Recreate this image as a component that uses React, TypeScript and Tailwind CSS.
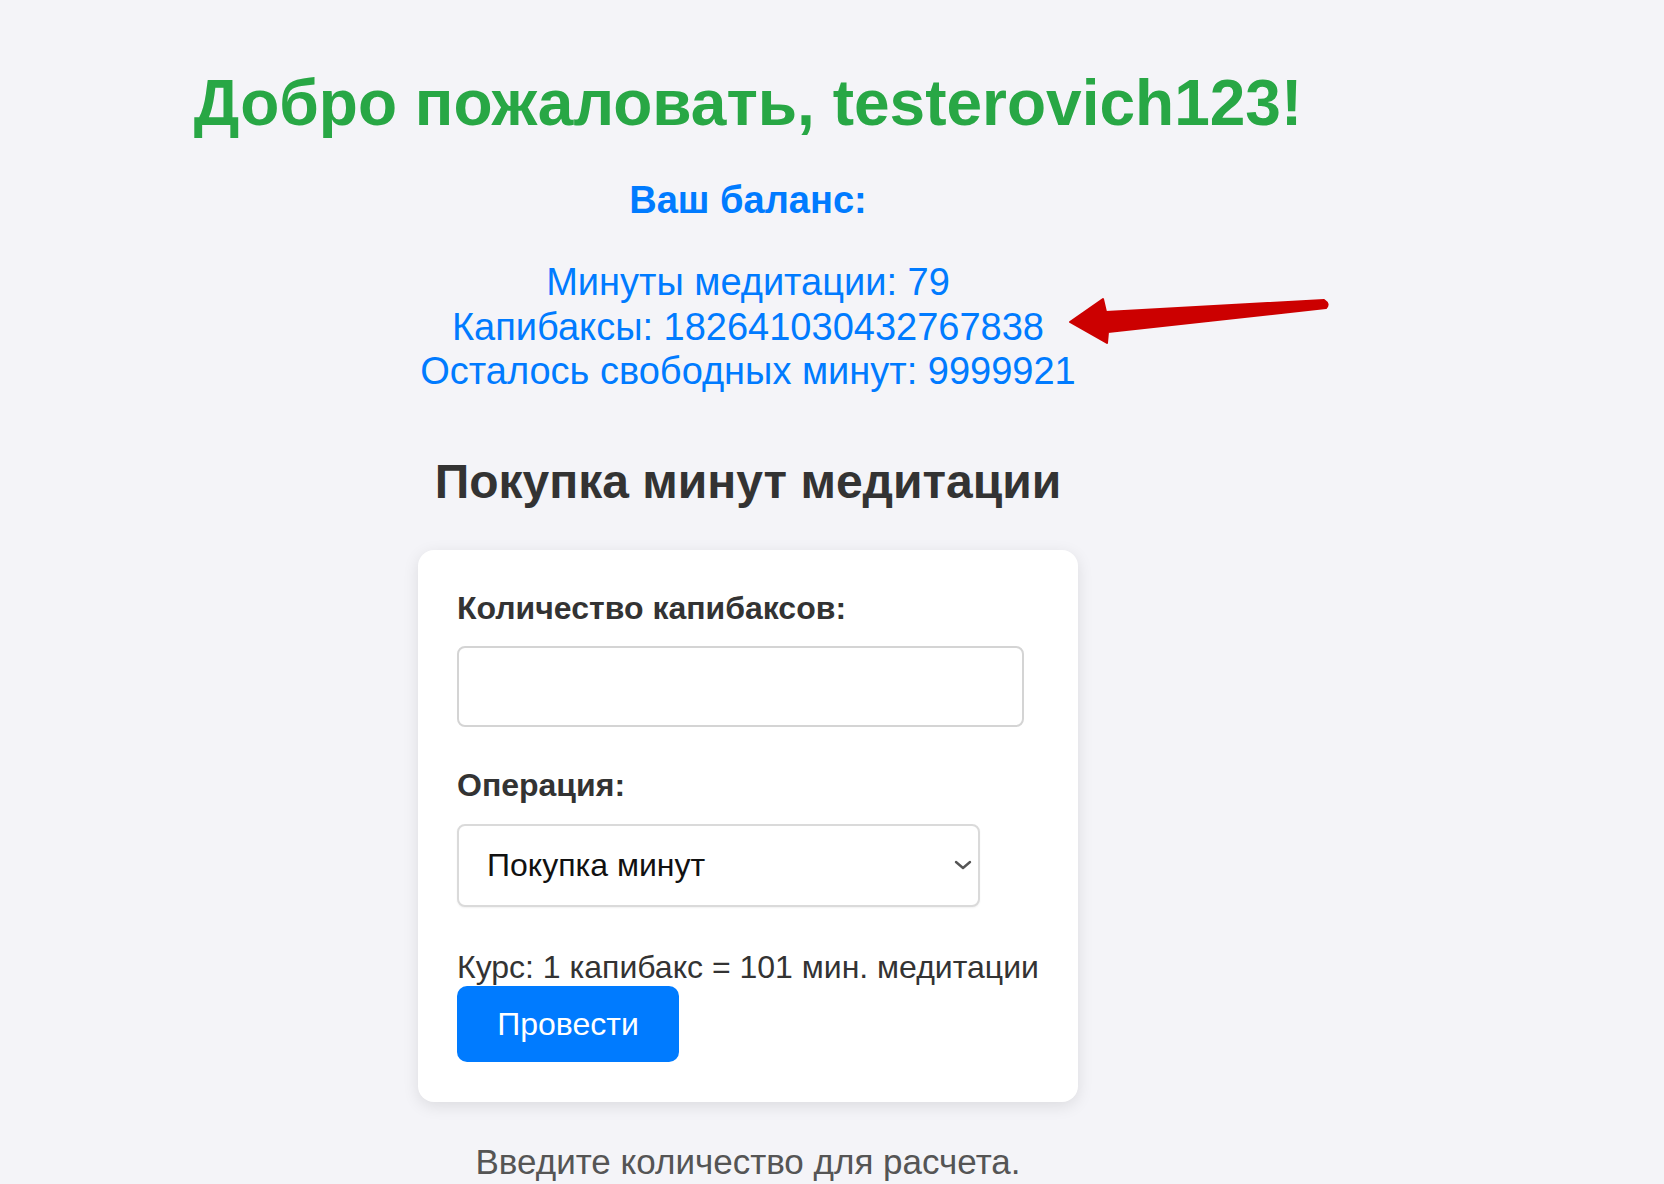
import React from 'react'

// Balance page with purchase form
export default function App() {
  return (
    <div className="relative min-h-screen bg-[#f4f4f8] font-['Liberation_Sans',Arial,sans-serif]">
      <div className="flex w-[1496px] flex-col items-center pt-[66px] text-center">
        <h1 className="text-[64px] font-bold leading-[74px] text-[#28a745]">
          Добро пожаловать, testerovich123!
        </h1>

        <h3 className="mt-[38px] text-[38px] font-bold leading-[44px] text-[#007bff]">
          Ваш баланс:
        </h3>

        <div className="mt-[38px] text-[38px] leading-[44.5px] text-[#007bff]">
          <p>Минуты медитации: 79</p>
          <p>Капибаксы: 182641030432767838</p>
          <p>Осталось свободных минут: 9999921</p>
        </div>

        <h2 className="mt-[60px] text-[48px] font-bold leading-[55px] text-[#333333]">
          Покупка минут медитации
        </h2>

        {/* Form card */}
        <div className="mt-[41px] w-[660px] rounded-[16px] bg-white px-[39px] pb-[40px] pt-[40px] text-left shadow-[0_4px_16px_rgba(0,0,0,0.10)]">
          <label className="block text-[32px] font-bold leading-[37px] text-[#333333]">
            Количество капибаксов:
          </label>
          <input
            type="text"
            className="mt-[19px] block h-[81px] w-[567px] rounded-[8px] border-2 border-[#d4d4d4] bg-white px-[20px] text-[32px] outline-none"
          />

          <label className="mt-[40px] block text-[32px] font-bold leading-[37px] text-[#333333]">
            Операция:
          </label>
          <div className="relative mt-[20px] h-[83px] w-[523px]">
            <select
              defaultValue="buy"
              className="h-full w-full appearance-none rounded-[8px] border-2 border-[#dadada] bg-white pl-[28px] text-[32px] text-[#111111] shadow-[0_1px_2px_rgba(0,0,0,0.06)] outline-none"
            >
              <option value="buy">Покупка минут</option>
              <option value="sell">Продажа минут</option>
            </select>
            <svg
              className="pointer-events-none absolute right-[8px] top-[36px]"
              width="18"
              height="10"
              viewBox="0 0 18 10"
              fill="none"
            >
              <path
                d="M2 2l7 6 7-6"
                stroke="#555555"
                strokeWidth="2.4"
                strokeLinecap="round"
                strokeLinejoin="round"
              />
            </svg>
          </div>

          <p className="mt-[42px] text-[32px] leading-[37px] text-[#333333]">
            Курс: 1 капибакс = 101 мин. медитации
          </p>
          <button className="h-[76px] w-[222px] rounded-[10px] bg-[#007bff] text-[32px] text-white">
            Провести
          </button>
        </div>

        <p className="mt-[40px] text-[35px] leading-[40px] text-[#555555]">
          Введите количество для расчета.
        </p>
      </div>

      {/* Red annotation arrow */}
      <svg
        className="absolute left-[1060px] top-[290px]"
        width="280"
        height="62"
        viewBox="0 0 280 62"
      >
        <path
          d="M10 32 L43 9 L46 22 L264 10 Q270 14 266 18 L48 42 L47 53 Z"
          fill="#cc0000"
          stroke="#cc0000"
          strokeWidth="2"
          strokeLinejoin="round"
        />
      </svg>
    </div>
  )
}
